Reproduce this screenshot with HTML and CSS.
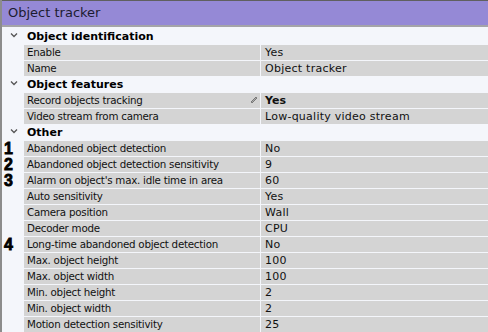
FILE: index.html
```html
<!DOCTYPE html>
<html>
<head>
<meta charset="utf-8">
<link rel="stylesheet" href="styles.css">
</head>
<body>
<div class="panel">
  <div class="title">Object tracker</div>
  <div class="rows">
    <div class="group"><span class="chev"><svg width="8" height="6" viewBox="0 0 8 6"><path d="M1 1.5 L4 4.5 L7 1.5" fill="none" stroke="#555" stroke-width="1.3"/></svg></span><span class="glabel">Object identification</span></div>
    <div class="row"><span class="gut"></span><span class="name">Enable</span><span class="val">Yes</span></div>
    <div class="row"><span class="gut"></span><span class="name">Name</span><span class="val">Object tracker</span></div>
    <div class="group"><span class="chev"><svg width="8" height="6" viewBox="0 0 8 6"><path d="M1 1.5 L4 4.5 L7 1.5" fill="none" stroke="#555" stroke-width="1.3"/></svg></span><span class="glabel">Object features</span></div>
    <div class="row"><span class="gut"></span><span class="name">Record objects tracking<svg class="pen" width="8" height="8" viewBox="0 0 8 8"><path d="M1.5 6.5 L6.5 1.5" stroke="#333" stroke-width="1.6"/><path d="M2 6 L6 2" stroke="#fff" stroke-width="0.6"/></svg></span><span class="val bold">Yes</span></div>
    <div class="row"><span class="gut"></span><span class="name">Video stream from camera</span><span class="val">Low-quality video stream</span></div>
    <div class="group"><span class="chev"><svg width="8" height="6" viewBox="0 0 8 6"><path d="M1 1.5 L4 4.5 L7 1.5" fill="none" stroke="#555" stroke-width="1.3"/></svg></span><span class="glabel">Other</span></div>
    <div class="row"><span class="gut"><b class="num">1</b></span><span class="name">Abandoned object detection</span><span class="val">No</span></div>
    <div class="row"><span class="gut"><b class="num">2</b></span><span class="name">Abandoned object detection sensitivity</span><span class="val">9</span></div>
    <div class="row"><span class="gut"><b class="num">3</b></span><span class="name">Alarm on object's max. idle time in area</span><span class="val">60</span></div>
    <div class="row"><span class="gut"></span><span class="name">Auto sensitivity</span><span class="val">Yes</span></div>
    <div class="row"><span class="gut"></span><span class="name">Camera position</span><span class="val">Wall</span></div>
    <div class="row"><span class="gut"></span><span class="name">Decoder mode</span><span class="val">CPU</span></div>
    <div class="row"><span class="gut"><b class="num">4</b></span><span class="name">Long-time abandoned object detection</span><span class="val">No</span></div>
    <div class="row"><span class="gut"></span><span class="name">Max. object height</span><span class="val">100</span></div>
    <div class="row"><span class="gut"></span><span class="name">Max. object width</span><span class="val">100</span></div>
    <div class="row"><span class="gut"></span><span class="name">Min. object height</span><span class="val">2</span></div>
    <div class="row"><span class="gut"></span><span class="name">Min. object width</span><span class="val">2</span></div>
    <div class="row"><span class="gut"></span><span class="name">Motion detection sensitivity</span><span class="val">25</span></div>
  </div>
</div>
</body>
</html>
```
FILE: styles.css
```css
html, body { margin: 0; padding: 0; }
body { width: 488px; height: 332px; overflow: hidden; background: #f4f6fb; font-family: "DejaVu Sans", Verdana, sans-serif; }
.panel { border-left: 2px solid #8c8c8c; height: 332px; box-sizing: border-box; }
.title {
  height: 24px; border-top: 1px solid #606060; border-bottom: 2px solid #a4a4a8;
  background: #9589d6; color: #1c1c30; font-size: 13px; line-height: 23px;
  padding-left: 6px; box-sizing: content-box;
}
.rows { padding-top: 1px; }
.group { height: 16px; display: flex; align-items: center; background: #f4f6fb; }
.chev { width: 25px; display: flex; justify-content: center; box-sizing: border-box; padding-right: 2px; margin-top: -3px; }
.glabel { font-weight: bold; font-size: 11px; color: #000; }
.row { height: 16px; display: flex; box-sizing: border-box; }
.gut { width: 22px; flex: none; position: relative; }
.num { position: absolute; left: 2px; top: 1px; font-family: "Liberation Sans", Arial, sans-serif; font-weight: 900; font-size: 16px; color: #000; line-height: 15px; -webkit-text-stroke: 0.8px #000; }
.name, .val { margin-top: 1px; height: 15px; background: #d4d4d4; line-height: 15px; color: #111; white-space: nowrap; }
.name { width: 236px; flex: none; padding-left: 3px; box-sizing: border-box; position: relative; font-size: 10.3px; letter-spacing: -0.25px; }
.val { flex: 1; margin-left: 1px; padding-left: 4px; font-size: 11px; letter-spacing: 0.25px; }
.bold { font-weight: bold; letter-spacing: 0; }
.pen { position: absolute; right: 2px; top: 3px; }
```
